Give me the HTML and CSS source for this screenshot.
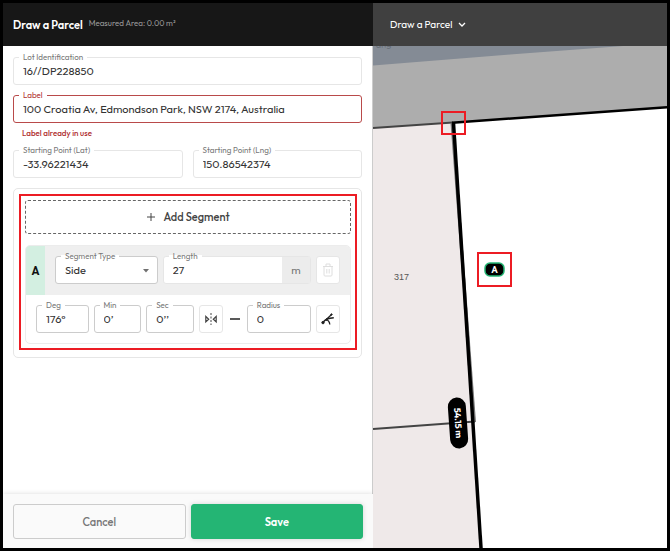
FILE: index.html
```html
<!DOCTYPE html>
<html lang="en">
<head>
<meta charset="utf-8">
<meta name="viewport" content="width=device-width, initial-scale=1">
<title>Draw a Parcel</title>
<link rel="stylesheet" href="styles.css">
</head>
<body>
<div class="app">
  <section class="panel">
    <header class="panel-header">
      <h1 class="panel-title">Draw a Parcel</h1>
      <p class="panel-meta">Measured Area: 0.00 m²</p>
    </header>
    <form class="panel-form">
      <div class="panel-body">
        <div class="field">
          <label for="lot">Lot Identification</label>
          <input id="lot" type="text" value="16//DP228850">
        </div>
        <div class="field-group">
          <div class="field field-error">
            <label for="label">Label</label>
            <input id="label" type="text" value="100 Croatia Av, Edmondson Park, NSW 2174, Australia" aria-describedby="label-help">
          </div>
          <p class="field-help" id="label-help">Label already in use</p>
        </div>
        <div class="pair">
          <div class="field">
            <label for="lat">Starting Point (Lat)</label>
            <input id="lat" type="text" value="-33.96221434">
          </div>
          <div class="field">
            <label for="lng">Starting Point (Lng)</label>
            <input id="lng" type="text" value="150.86542374">
          </div>
        </div>
        <div class="card">
          <div class="highlight">
            <button class="add-button" type="button">
              <svg width="10" height="10" viewBox="0 0 10 10" aria-hidden="true"><path d="M5 1v8M1 5h8" stroke="currentColor" fill="none"/></svg>
              Add Segment
            </button>
            <div class="segment">
              <div class="segment-top">
                <div class="segment-name">A</div>
                <div class="segment-main">
                  <div class="field field-strong field-type">
                    <label for="type">Segment Type</label>
                    <select id="type"><option>Side</option></select>
                    <svg class="caret" width="6" height="4" viewBox="0 0 6 4" aria-hidden="true"><path d="M0 0h6L3 3.500z" fill="#707070"/></svg>
                  </div>
                  <div class="field field-length">
                    <label for="length">Length</label>
                    <input id="length" type="text" value="27">
                    <span class="unit">m</span>
                  </div>
                  <button class="icon-button" type="button" aria-label="Delete segment" disabled>
                    <svg width="12" height="14" viewBox="0 0 12 14" fill="none" stroke="#dedede" aria-hidden="true"><path d="M1 3.500h10M4 3V1h4v2M2 3.500V12q0 1 1 1h6q1 0 1-1V3.500M4.800 6v4.500M7.200 6v4.500"/></svg>
                  </button>
                </div>
              </div>
              <div class="segment-bottom">
                <div class="field field-strong field-deg">
                  <label for="deg">Deg</label>
                  <input id="deg" type="text" value="176°">
                </div>
                <div class="field field-strong field-min">
                  <label for="min">Min</label>
                  <input id="min" type="text" value="0’">
                </div>
                <div class="field field-strong field-min">
                  <label for="sec">Sec</label>
                  <input id="sec" type="text" value="0’’">
                </div>
                <button class="icon-button" type="button" aria-label="Mirror">
                  <svg width="12" height="14" viewBox="0 0 12 14" fill="none" stroke="#444" aria-hidden="true"><path d="M6 1v12" stroke-dasharray="2 1.500"/><path d="M.8 4.500v5.400L3.700 7.200zM11.200 4.500v5.400L8.300 7.200z" stroke-width="1.200"/></svg>
                </button>
                <svg class="dash" width="10" height="2" viewBox="0 0 10 2" aria-hidden="true"><path d="M0 1h10" stroke="#222" stroke-width="1.500"/></svg>
                <div class="field field-strong field-radius">
                  <label for="radius">Radius</label>
                  <input id="radius" type="text" value="0">
                </div>
                <button class="icon-button" type="button" aria-label="Arc tool">
                  <svg width="14" height="14" viewBox="0 0 14 14" fill="none" stroke="#222" aria-hidden="true"><path d="M2 10.500Q4.500 6.300 12.800 5.800" stroke-width="1.400"/><path d="M5.300 7.500l5-4.700M5.200 7.600Q8.500 8.500 8.800 12.500" stroke-width="1.300"/><circle cx="2" cy="10.600" r="1.200" fill="#222"/><circle cx="10.500" cy="2.500" r=".7" fill="#222"/><circle cx="5.500" cy="7.600" r=".8" fill="#222"/></svg>
                </button>
              </div>
            </div>
          </div>
        </div>
      </div>
      <footer class="panel-footer">
        <button class="action action-cancel" type="button">Cancel</button>
        <button class="action action-save" type="submit">Save</button>
      </footer>
    </form>
  </section>
  <main class="map-pane">
    <div class="map-header">
      <button class="mode-button" type="button">
        Draw a Parcel
        <svg width="8" height="6" viewBox="0 0 8 6" aria-hidden="true"><path d="M1 1l3 3 3-3" fill="none" stroke="currentColor" stroke-width="1.300"/></svg>
      </button>
    </div>
    <svg class="map" viewBox="0 0 294 502" preserveAspectRatio="xMinYMin slice" role="img" aria-label="Parcel map">
      <rect width="294" height="502" fill="#fff"/>
      <path d="M0 82L80 77L108 502H0z" fill="#efe9e9"/>
      <path d="M0 0H294V61L80 76.500L0 82z" fill="#adadad"/>
      <path d="M0 0H250L137 8.500L0 19.500z" fill="#848b95"/>
      <text class="street" x="3" y="2" transform="rotate(-4 3 2)">ang</text>
      <path d="M0 82L80 76.500" stroke="#444" stroke-width="2"/>
      <path d="M0 383L102 375.500" stroke="#444" stroke-width="2"/>
      <path d="M79 77L101.500 376" stroke="#777" stroke-width="3"/>
      <path d="M79 76.700L294 61.300" stroke="#000" stroke-width="2.500"/>
      <path d="M80.500 77L108 502" stroke="#000" stroke-width="3.500"/>
      <text class="lot" x="21" y="234">317</text>
      <g transform="translate(85 377) rotate(86)">
        <rect x="-25.500" y="-9" width="51" height="18" rx="9" fill="#000"/>
        <text class="measure" x="0" y="3" text-anchor="middle">54.15 m</text>
      </g>
      <rect x="112" y="217" width="19" height="13" rx="5" fill="#000" stroke="#24b574" stroke-width="1.500"/>
      <text class="marker" x="121.500" y="226.500" text-anchor="middle">A</text>
      <g fill="none" stroke="#ec1c24" stroke-width="2">
        <rect x="69" y="66" width="23" height="22"/>
        <rect x="105" y="207" width="33" height="33"/>
      </g>
    </svg>
  </main>
</div>
</body>
</html>
```
FILE: styles.css
```css
* {
  box-sizing: border-box;
}

body {
  margin: 0;
  background: #000;
  color: #333;
  font-family: Outfit, Lato, sans-serif;
  font-size: 11px;
}

h1,
p {
  margin: 0;
}

button,
input,
select {
  margin: 0;
  color: inherit;
  font: inherit;
}

.app {
  display: grid;
  grid-template-columns: 370fr 294fr;
  min-height: 100vh;
  padding: 3px;
}

.panel {
  display: flex;
  flex-direction: column;
  min-width: 0;
  background: #fff;
  border-right: 1px solid #ccc;
}

.panel-header,
.map-header {
  display: flex;
  align-items: center;
  height: 43px;
}

.panel-header {
  gap: 6px;
  margin-right: -1px;
  padding: 0 10px;
  background: #171717;
}

.panel-title {
  color: #fff;
  font-size: 11px;
  font-weight: 600;
}

.panel-meta {
  padding-bottom: 3px;
  color: #999;
  font-size: 8px;
}

.panel-form {
  display: flex;
  flex: 1;
  flex-direction: column;
}

.panel-body {
  display: flex;
  flex: 1;
  flex-direction: column;
  gap: 10px;
  padding: 11px 10px;
}

.field {
  position: relative;
  display: flex;
  min-width: 0;
  height: 28px;
  background: #fff;
  border: 1px solid #e6e6e6;
  border-radius: 3px;
}

.field label {
  position: absolute;
  top: -7px;
  left: 5px;
  padding: 0 4px;
  background: linear-gradient(transparent 5px, #fff 5px);
  color: #777;
  font-size: 8px;
  line-height: 12px;
  white-space: nowrap;
}

.field input,
.field select {
  flex: 1;
  width: 100%;
  min-width: 0;
  padding: 0 9px;
  background: none;
  border: 0;
  outline: 0;
  appearance: none;
}

.field-strong {
  border-color: #ccc;
}

.field-error {
  border-color: #b94a4a;
}

.field-error label,
.field-help {
  color: #b03030;
}

.field-help {
  padding: 3px 9px 0;
  font-size: 8px;
  font-weight: 500;
  line-height: 14px;
}

.pair {
  display: grid;
  grid-template-columns: 1fr 1fr;
  gap: 10px;
}

.card {
  padding: 5px 4px 7px 5px;
  border: 1px solid #e6e6e6;
  border-radius: 5px;
}

.highlight {
  display: flex;
  flex-direction: column;
  gap: 11px;
  padding: 4px;
  border: 2px solid #ec1c24;
}

.add-button {
  display: flex;
  align-items: center;
  justify-content: center;
  gap: 7px;
  height: 34px;
  background: #fff;
  border: 1px dashed #666;
  border-radius: 3px;
  color: #444;
  font-weight: 500;
}

.segment {
  overflow: hidden;
  border: 1px solid #ececec;
  border-radius: 5px;
}

.segment-top {
  display: flex;
  height: 49px;
  background: #efefef;
}

.segment-name {
  display: flex;
  align-items: center;
  justify-content: center;
  width: 19px;
  background: #d3efe1;
  color: #111;
  font-weight: 700;
}

.segment-main,
.segment-bottom {
  display: flex;
  flex: 1;
  gap: 5px;
  padding: 10px;
}

.segment-bottom {
  align-items: center;
}

.field-type {
  flex: 102 1 0;
}

.field-length {
  flex: 148 1 0;
}

.field-deg {
  flex: 52 1 0;
}

.field-min {
  flex: 47 1 0;
}

.field-radius {
  flex: 64 1 0;
}

.caret {
  position: absolute;
  top: 12px;
  right: 8px;
  pointer-events: none;
}

.unit {
  display: flex;
  align-items: center;
  justify-content: center;
  width: 28px;
  background: #ececec;
  color: #777;
}

.icon-button {
  display: flex;
  flex: none;
  align-items: center;
  justify-content: center;
  width: 24px;
  height: 28px;
  padding: 0;
  background: #fff;
  border: 1px solid #e6e6e6;
  border-radius: 3px;
}

.dash {
  flex: none;
  margin: 0 2px;
}

.panel-footer {
  display: grid;
  grid-template-columns: 1fr 1fr;
  gap: 5px;
  margin-right: -1px;
  padding: 10px 10px 9px;
  background: #fafafa;
  box-shadow: 0 0 5px rgba(0, 0, 0, 0.15);
}

.action {
  height: 35px;
  border: 1px solid #ccc;
  border-radius: 3px;
  font-weight: 500;
}

.action-cancel {
  background: #fafafa;
  color: #777;
}

.action-save {
  background: #24b574;
  border-color: #24b574;
  box-shadow: 0 0 5px rgba(0, 0, 0, 0.15);
  color: #fff;
  font-weight: 600;
}

.map-pane {
  display: flex;
  flex-direction: column;
  min-width: 0;
}

.map-header {
  padding: 0 17px;
  background: #404040;
}

.mode-button {
  display: flex;
  align-items: center;
  gap: 6px;
  padding: 0;
  background: none;
  border: 0;
  color: #fff;
  font-size: 10px;
}

.map {
  flex: 1;
  width: 100%;
  min-height: 0;
}

.street {
  fill: #666d77;
  font-size: 9px;
}

.lot {
  fill: #555;
  font-family: "Liberation Sans", sans-serif;
  font-size: 9px;
}

.measure,
.marker {
  fill: #fff;
  font-size: 9px;
  font-weight: 700;
}
```
